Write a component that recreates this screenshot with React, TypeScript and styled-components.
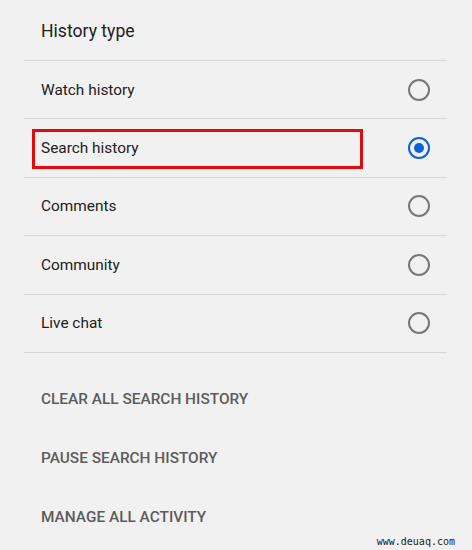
import * as React from "react";
import styled, { createGlobalStyle } from "styled-components";

const GlobalStyle = createGlobalStyle`
  html, body {
    margin: 0;
    padding: 0;
    background: #f1f1f1;
  }
  body {
    font-family: Roboto, "Liberation Sans", Arial, sans-serif;
  }
`;

const historyTypes = [
  { label: "Watch history", selected: false },
  { label: "Search history", selected: true, highlighted: true },
  { label: "Comments", selected: false },
  { label: "Community", selected: false },
  { label: "Live chat", selected: false },
];

const actions = [
  "Clear all search history",
  "Pause search history",
  "Manage all activity",
];

export default function App() {
  return (
    <Page>
      <GlobalStyle />
      <Panel>
        <Heading>History type</Heading>
        {historyTypes.map((item) => (
          <Row key={item.label}>
            <RowLabel>{item.label}</RowLabel>
            <Radio $checked={item.selected} />
            {item.highlighted && <Highlight />}
          </Row>
        ))}
        <Actions>
          {actions.map((a) => (
            <ActionButton key={a}>{a}</ActionButton>
          ))}
        </Actions>
      </Panel>
      <Watermark>www.deuaq.com</Watermark>
    </Page>
  );
}

const Page = styled.div`
  position: relative;
  width: 472px;
  height: 550px;
  background: #f1f1f1;
  overflow: hidden;
`;

const Panel = styled.div`
  display: flex;
  flex-direction: column;
  padding: 0 25px 0 24px;
`;

const Heading = styled.div`
  display: flex;
  align-items: center;
  box-sizing: border-box;
  height: 61px;
  padding: 1px 0 0 17px;
  border-bottom: 1px solid #d8d8d8;
  font-size: 17.6px;
  color: #212121;
`;

const Row = styled.div`
  position: relative;
  display: flex;
  align-items: center;
  justify-content: space-between;
  box-sizing: border-box;
  height: 58.4px;
  padding: 0 17px 0 17px;
  border-bottom: 1px solid #d8d8d8;
`;

const RowLabel = styled.span`
  font-size: 15.4px;
  color: #212121;
`;

const Radio = styled.span<{ $checked: boolean }>`
  position: relative;
  box-sizing: border-box;
  width: 22px;
  height: 22px;
  border-radius: 50%;
  border: 2px solid ${(p) => (p.$checked ? "#0b62d6" : "#777777")};

  &::after {
    content: "";
    display: ${(p) => (p.$checked ? "block" : "none")};
    position: absolute;
    left: 4px;
    top: 4px;
    width: 10px;
    height: 10px;
    border-radius: 50%;
    background: #0b62d6;
  }
`;

const Highlight = styled.div`
  position: absolute;
  left: 8px;
  top: 10px;
  width: 331px;
  height: 40px;
  box-sizing: border-box;
  border: 3px solid #e40a0a;
  pointer-events: none;
`;

const Actions = styled.div`
  display: flex;
  flex-direction: column;
  padding-top: 17px;
`;

const ActionButton = styled.div`
  display: flex;
  align-items: center;
  height: 59px;
  padding-left: 17px;
  font-size: 15.4px;
  font-weight: 500;
  text-transform: uppercase;
  color: #5c5c5c;
`;

const Watermark = styled.div`
  position: absolute;
  right: 17px;
  bottom: 3px;
  font-family: "DejaVu Sans Mono", "Liberation Mono", monospace;
  font-size: 10px;
  color: #1c1c1c;
`;
